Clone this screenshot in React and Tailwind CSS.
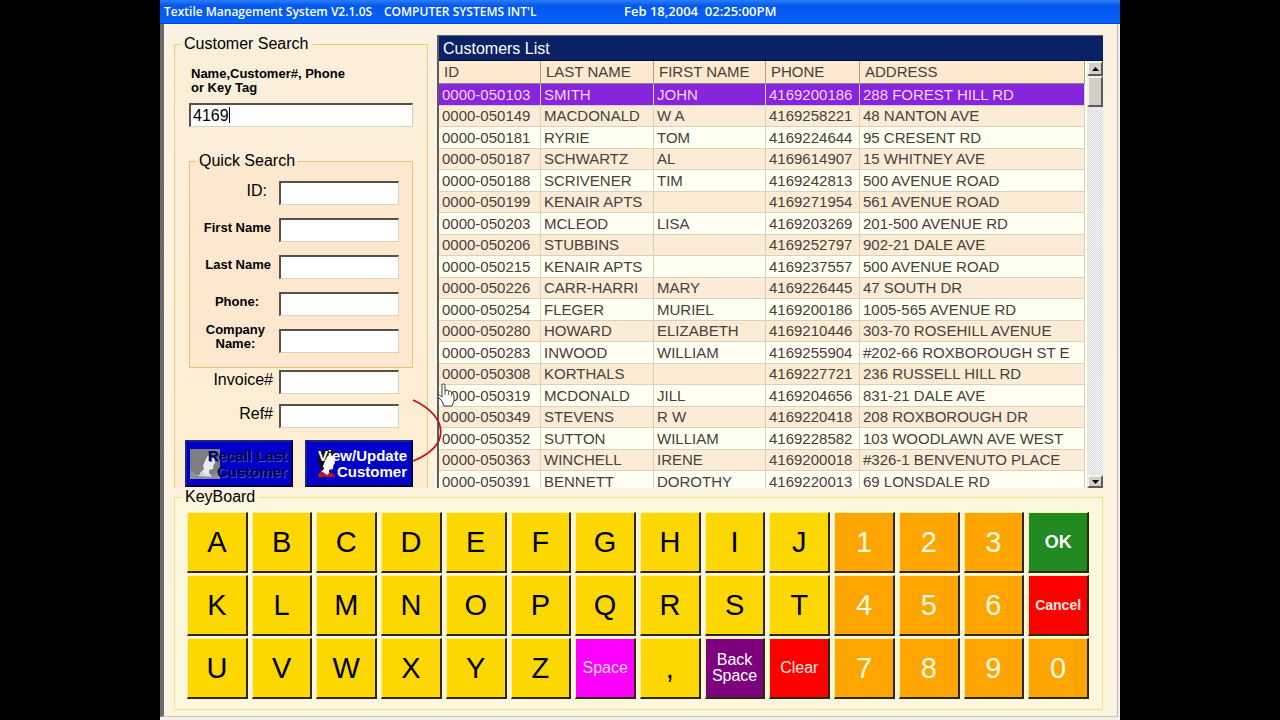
import React from "react";

const customers = [
  ["0000-050103", "SMITH", "JOHN", "4169200186", "288 FOREST HILL RD"],
  ["0000-050149", "MACDONALD", "W A", "4169258221", "48 NANTON AVE"],
  ["0000-050181", "RYRIE", "TOM", "4169224644", "95 CRESENT RD"],
  ["0000-050187", "SCHWARTZ", "AL", "4169614907", "15 WHITNEY AVE"],
  ["0000-050188", "SCRIVENER", "TIM", "4169242813", "500 AVENUE ROAD"],
  ["0000-050199", "KENAIR APTS", "", "4169271954", "561 AVENUE ROAD"],
  ["0000-050203", "MCLEOD", "LISA", "4169203269", "201-500 AVENUE RD"],
  ["0000-050206", "STUBBINS", "", "4169252797", "902-21 DALE AVE"],
  ["0000-050215", "KENAIR APTS", "", "4169237557", "500 AVENUE ROAD"],
  ["0000-050226", "CARR-HARRI", "MARY", "4169226445", "47 SOUTH DR"],
  ["0000-050254", "FLEGER", "MURIEL", "4169200186", "1005-565 AVENUE RD"],
  ["0000-050280", "HOWARD", "ELIZABETH", "4169210446", "303-70 ROSEHILL AVENUE"],
  ["0000-050283", "INWOOD", "WILLIAM", "4169255904", "#202-66 ROXBOROUGH ST E"],
  ["0000-050308", "KORTHALS", "", "4169227721", "236 RUSSELL HILL RD"],
  ["0000-050319", "MCDONALD", "JILL", "4169204656", "831-21 DALE AVE"],
  ["0000-050349", "STEVENS", "R W", "4169220418", "208 ROXBOROUGH DR"],
  ["0000-050352", "SUTTON", "WILLIAM", "4169228582", "103 WOODLAWN AVE WEST"],
  ["0000-050363", "WINCHELL", "IRENE", "4169200018", "#326-1 BENVENUTO PLACE"],
  ["0000-050391", "BENNETT", "DOROTHY", "4169220013", "69 LONSDALE RD"],
];

const keys = [
  ..."ABCDEFGHIJ", "1", "2", "3", "OK",
  ..."KLMNOPQRST", "4", "5", "6", "Cancel",
  ..."UVWXYZ", "Space", ",", "Back Space", "Clear", "7", "8", "9", "0",
];

const specialKeys = {
  OK: "bg-[#218a21] text-white text-lg font-bold",
  Cancel: "bg-[#fe0000] text-[#ffe9e0] text-sm font-bold",
  Clear: "bg-[#fe0000] text-[#ffe9e0] text-base",
  Space: "bg-[#fe00fe] text-[#ffd9ff] text-base",
  "Back Space": "bg-[#7d007d] text-white text-base",
};

function keyStyle(k) {
  if (specialKeys[k]) return specialKeys[k];
  if (/\d/.test(k)) return "bg-[#ffa500] text-[#fffbe0] text-[29px]";
  return "bg-[#fcd800] text-black text-[29px]";
}

const box =
  "h-6 border border-t-2 border-l-2 border-t-[#55504a] border-l-[#55504a] border-r-[#d8d2c2] border-b-[#d8d2c2] bg-white outline-none";

function Field({ id, label, labelClass }) {
  return (
    <div className="flex h-6 items-center">
      <label htmlFor={id} className={"flex w-[89px] shrink-0 justify-end pb-1 " + labelClass}>
        {label}
      </label>
      <input id={id} type="text" className={"w-[120px] " + box} />
    </div>
  );
}

function Portrait({ muted }) {
  return (
    <svg viewBox="0 0 30 30" className="h-[30px] w-[30px] shrink-0" aria-hidden="true">
      {muted && <rect width="30" height="30" fill="#7b7f84" />}
      {muted && <path d="M0 30V21L8 26L20 27L30 23V30Z" fill="#8d9094" />}
      {!muted && (
        <path d="M10 16C6 10 8 2 15 1C21 0 25 2 25 6L20 8L16 14L13 21L10 20Z" fill="#15101c" />
      )}
      <path
        d="M17 8C19 5 24 6 24 10L25 14L23.500 16L23 20L19 21L19 24L21 26L11 27L10 24L14 20L13 17L15 12Z"
        fill={muted ? "#e8eaec" : "#ffffff"}
      />
      {muted && <path d="M8 27L13 22L15 26L20 25L22 28Z" fill="#d3d6d9" />}
      {!muted && <path d="M8 28C8 23 11 22 13 23L17 26L20 23C23 24 25 26 25 28Z" fill="#c3121c" />}
    </svg>
  );
}

const blueButton =
  "relative flex h-[47px] flex-1 items-center border-2 border-t-[#1e1e8c] border-l-[#1e1e8c] border-r-[#00003c] border-b-[#00003c] bg-[#0000c8] pl-[3px]";

function SearchPanel() {
  return (
    <div className="relative w-[254px] shrink-0">
      <fieldset className="h-full min-w-0 border border-b-0 border-[#e9cd78] bg-linear-to-b from-[#fcefda] to-[#fdedd2] px-[14px]">
        <legend className="-ml-2 px-[3px] text-base leading-5">Customer Search</legend>
        <div className="flex flex-col pt-[13px]">
          <label htmlFor="search" className="pl-[2px] text-[13px] leading-[14px] font-bold">
            Name,Customer#, Phone
            <br />
            or Key Tag
          </label>
          <div className="relative mt-2 flex">
            <input id="search" type="text" defaultValue="4169" className={"w-full px-[2px] text-base " + box} />
            <span className="absolute top-1 left-10 h-4 w-px bg-black" />
          </div>
          <fieldset className="mt-6 flex min-w-0 flex-col border border-[#e6c472] bg-[#fde8cf] pb-[14px]">
            <legend className="ml-[6px] px-[3px] text-base leading-5">Quick Search</legend>
            <div className="flex flex-col gap-[13px] pt-[10px]">
              <Field id="cid" label="ID:" labelClass="text-base pr-3" />
              <Field id="first" label="First Name" labelClass="text-[13px] font-bold pr-2" />
              <Field id="last" label="Last Name" labelClass="text-[13px] font-bold pr-2" />
              <Field id="phone" label="Phone:" labelClass="text-[13px] font-bold pr-5" />
              <Field
                id="company"
                label={
                  <span>
                    Company
                    <br />
                    Name:
                  </span>
                }
                labelClass="text-[13px] leading-[14px] font-bold text-center pr-[14px] pb-2"
              />
            </div>
          </fieldset>
          <div className="mt-[2px] flex flex-col gap-[10px] pl-px">
            <Field id="invoice" label="Invoice#" labelClass="text-base pr-[6px]" />
            <Field id="ref" label="Ref#" labelClass="text-base pr-[6px]" />
          </div>
          <div className="mt-3 -ml-1 flex gap-3">
            <button disabled className={blueButton}>
              <Portrait muted />
              <span className="absolute right-1 text-right text-[15px] leading-4 font-bold text-[#00004e] [text-shadow:1px_1px_0_#4c4cc8]">
                Recall Last
                <br />
                Customer
              </span>
            </button>
            <button className={blueButton}>
              <Portrait />
              <span className="absolute right-1 text-right text-[15px] leading-4 font-bold text-white">
                View/Update
                <br />
                Customer
              </span>
            </button>
          </div>
        </div>
      </fieldset>
      <svg
        viewBox="0 0 30 64"
        className="pointer-events-none absolute right-[-14px] bottom-[25px] z-10 h-16 w-[30px]"
        aria-hidden="true"
      >
        <path d="M1 1C38 18 38 48 1 62" fill="none" stroke="#c01414" strokeWidth="1.8" />
      </svg>
      <svg
        viewBox="0 0 18 24"
        className="pointer-events-none absolute right-[-27px] bottom-[81px] z-10 h-6 w-[18px]"
        aria-hidden="true"
      >
        <path
          d="M5 2C5 0.600 8 0.600 8 2V8L10 7L11.500 8L13.500 8L14.500 9.500L16.500 10.500L17 13V18L15 23H7L5 18L1 14C0.500 12 2.500 11.500 5 14Z"
          fill="#fff"
          stroke="#3a3a3a"
          strokeWidth="1"
        />
        <path d="M8 8V12M11.500 8V12M14.500 9.500V13" stroke="#3a3a3a" strokeWidth="0.8" />
      </svg>
    </div>
  );
}

const raised =
  "border-2 border-t-[#f4f2ec] border-l-[#f4f2ec] border-r-[#5a5a5a] border-b-[#5a5a5a] bg-[#d2cfc8]";

function CustomersPanel() {
  return (
    <section className="mt-px flex h-[453px] min-w-0 flex-1 flex-col overflow-hidden border-t border-l-2 border-t-[#5f6678] border-l-[#5d5d58] bg-[#fffff0]">
      <h2 className="h-[25px] shrink-0 border-b border-[#06102e] bg-[#0a2166] pl-1 text-base leading-[26px] text-white">
        Customers List
      </h2>
      <div className="flex min-h-0 flex-1">
        <div className="min-w-0 flex-1 overflow-hidden">
          <table className="w-full table-fixed border-separate border-spacing-0 text-[15px] leading-5 text-[#45403a]">
            <colgroup>
              <col className="w-[102px]" />
              <col className="w-[113px]" />
              <col className="w-[112px]" />
              <col className="w-[94px]" />
              <col />
            </colgroup>
            <thead>
              <tr className="h-[23px] bg-[#fde8d0]">
                {["ID", "LAST NAME", "FIRST NAME", "PHONE", "ADDRESS"].map((h) => (
                  <th
                    key={h}
                    className="border-r border-b border-r-[#a8a098] border-b-[#8f8578] py-0 pl-[5px] text-left font-normal whitespace-nowrap"
                  >
                    {h}
                  </th>
                ))}
              </tr>
            </thead>
            <tbody>
              {customers.map((row, i) => (
                <tr
                  key={row[0]}
                  className={
                    i === 0
                      ? "h-[22px] bg-[#8624de] text-[#fbd3f5]"
                      : i % 2
                        ? "h-[21px] bg-[#fdecd5]"
                        : "h-[22px] bg-[#fffff2]"
                  }
                >
                  {row.map((cell, j) => (
                    <td
                      key={j}
                      className="border-r border-b border-[#d8d0c0] py-0 pl-[3px] whitespace-nowrap"
                    >
                      {cell}
                    </td>
                  ))}
                </tr>
              ))}
            </tbody>
          </table>
        </div>
        <div className="ml-[2px] flex w-4 shrink-0 flex-col bg-[repeating-conic-gradient(#d9d9d9_0_25%,#f6f6f4_0_50%)] bg-[length:2px_2px]">
          <button aria-label="Scroll up" className={"flex h-[15px] shrink-0 items-center justify-center " + raised}>
            <svg viewBox="0 0 7 4" className="h-1 w-[7px]">
              <path d="M0 4L3.500 0L7 4Z" fill="#000" />
            </svg>
          </button>
          <div className={"h-[31px] shrink-0 " + raised} />
          <button
            aria-label="Scroll down"
            className={"mt-auto flex h-[13px] shrink-0 items-center justify-center " + raised}
          >
            <svg viewBox="0 0 7 4" className="h-1 w-[7px]">
              <path d="M0 0L3.500 4L7 0Z" fill="#000" />
            </svg>
          </button>
        </div>
      </div>
    </section>
  );
}

function Keyboard() {
  return (
    <fieldset className="-mt-px min-w-0 border border-[#efe08c] bg-[#fbf7dc] px-[12px] pb-[10px]">
      <legend className="-ml-[6px] px-1 text-base leading-5">KeyBoard</legend>
      <div className="grid grid-cols-[repeat(14,minmax(0,1fr))] gap-x-1 gap-y-[2px] pt-[5px] pr-px">
        {keys.map((k) => (
          <button
            key={k}
            className={
              "flex h-[61px] items-center justify-center border-t border-r-2 border-b-2 border-l border-t-[#fff2a8] border-r-[#2e260e] border-b-[#2e260e] border-l-[#fff2a8] text-center leading-4 " +
              keyStyle(k)
            }
          >
            {k}
          </button>
        ))}
      </div>
    </fieldset>
  );
}

export default function App() {
  return (
    <div className="flex min-h-screen justify-center bg-black font-['Liberation_Sans',Arial,sans-serif] text-black">
      <main className="flex w-full max-w-[960px] flex-col bg-[#f3f1ea]">
        <header className="flex h-6 items-center bg-linear-to-b from-[#2a7df4] via-[#0558ee] via-25% to-[#0560fa] border-b border-[#0348cc] pt-px pl-1 font-['Open_Sans',sans-serif] text-xs font-semibold whitespace-pre text-white">
          <h1 className="w-[220px]">Textile Management System V2.1.0S</h1>
          <span className="w-60">COMPUTER SYSTEMS INT'L</span>
          <span className="text-[13px]">Feb 18,2004  02:25:00PM</span>
        </header>
        <div className="mr-[2px] mb-[3px] flex-1 border-r border-b border-l-4 border-r-[#b9b9bd] border-b-[#c4c2c2] border-l-[#6a6a68] bg-linear-to-b from-[#fbf1e2] via-[#fcf2e0] to-[#fcf5dd] px-[10px] pt-[10px] pb-[5px]">
          <div className="flex h-[454px] gap-[9px] pr-1">
            <SearchPanel />
            <CustomersPanel />
          </div>
          <div className="pr-1">
            <Keyboard />
          </div>
        </div>
      </main>
    </div>
  );
}
